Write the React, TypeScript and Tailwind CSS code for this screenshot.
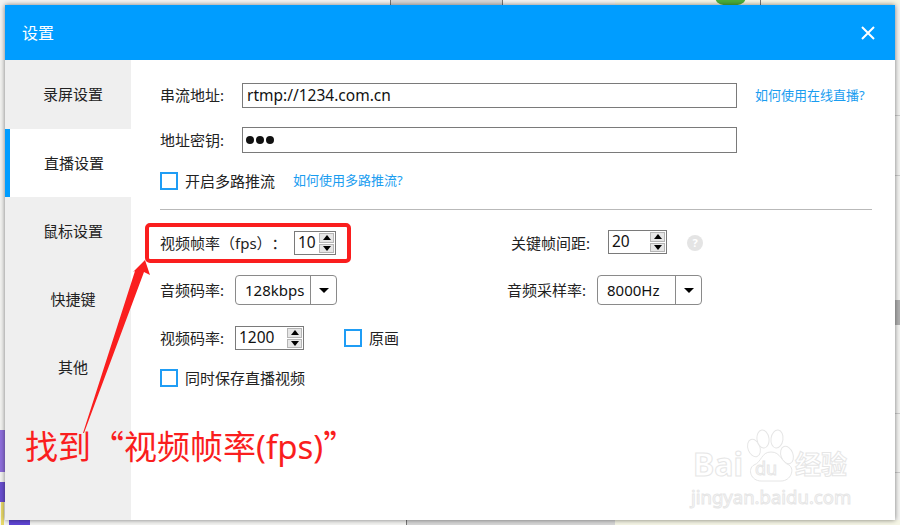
const font = "font-['Noto_Sans','Noto_Sans_CJK_SC',sans-serif]";

function Spinner({ value, className }: { value: string; className: string }) {
  return (
    <div className={`flex h-[24px] items-center justify-between border border-[#7a7a7a] bg-white pl-[3px] pr-[1px] ${className}`}>
      <span className="text-[15.5px] leading-none text-[#111]">{value}</span>
      <div className="flex h-[20px] w-[15px] flex-col gap-[1px]">
        <div className="flex flex-1 items-center justify-center border border-[#b5b5b5] bg-[#e6e6e6]">
          <div className="h-0 w-0 border-x-[4px] border-b-[5px] border-x-transparent border-b-black" />
        </div>
        <div className="flex flex-1 items-center justify-center border border-[#b5b5b5] bg-[#e6e6e6]">
          <div className="h-0 w-0 border-x-[4px] border-t-[5px] border-x-transparent border-t-black" />
        </div>
      </div>
    </div>
  );
}

function Select({ value, className, arrowClass }: { value: string; className: string; arrowClass: string }) {
  return (
    <div className={`flex h-[30px] items-center rounded-[4px] border border-[#8a8a8a] bg-white ${className}`}>
      <span className="flex-1 pl-[9px] text-[15px] leading-none text-[#111]">{value}</span>
      <div className={`flex h-full items-center justify-center border-l border-[#8a8a8a] ${arrowClass}`}>
        <div className="h-0 w-0 border-x-[5px] border-t-[5px] border-x-transparent border-t-black" />
      </div>
    </div>
  );
}

function Check({ label }: { label: string }) {
  return (
    <div className="flex items-center gap-[7px]">
      <div className="h-[18px] w-[18px] border-2 border-[#1f9df5] bg-white" />
      <span className="text-[15px] leading-none text-[#222]">{label}</span>
    </div>
  );
}

const navItems = ["录屏设置", "直播设置", "鼠标设置", "快捷键", "其他"];

export default function App() {
  return (
    <div className={`relative h-[525px] w-[900px] overflow-hidden bg-[#f4f4f2] ${font}`}>
      {/* the window behind the dialog */}
      <div className="absolute left-[390px] top-0 h-[5px] w-[113px] border-x border-[#777] bg-[#d8d8d8]" />
      <div className="absolute left-[615px] top-0 h-[5px] w-[285px] bg-[#f6f6e6]" />
      <div className="absolute left-[760px] top-0 h-[5px] w-px bg-[#777]" />
      <div className="absolute left-[715px] top-[-12px] h-[17px] w-[31px] rounded-full bg-[#4caf3a]" />
      <div className="absolute left-0 top-[430px] h-[42px] w-[5px] bg-[#8f6fdc]" />
      <div className="absolute left-0 top-[482px] h-[20px] w-[5px] bg-[#6a4fd0]" />
      <div className="absolute bottom-0 left-[1px] h-[23px] w-[3px] bg-[#e8d96a]" />
      <div className="absolute bottom-0 left-[9px] h-[5px] w-[21px] bg-[#5f45d6]" />
      <div className="absolute bottom-0 left-[406px] h-[5px] w-[209px] border-l border-[#777] bg-[#d8d8d8]" />
      <div className="absolute bottom-0 left-[615px] h-[5px] w-[285px] bg-[#f6f6e6]" />
      <div className="absolute right-0 top-[300px] h-[25px] w-[5px] bg-[#b0b0b0]" />
      <div className="absolute right-0 top-[115px] h-px w-[5px] bg-[#ccc]" />
      <div className="absolute right-0 top-[175px] h-px w-[5px] bg-[#ccc]" />
      <div className="absolute right-0 top-[413px] h-px w-[5px] bg-[#ccc]" />
      <div className="absolute right-0 top-[472px] h-px w-[5px] bg-[#ccc]" />

      <div className="relative ml-[5px] mt-[5px] flex h-[515px] w-[890px] flex-col bg-white shadow-[0_0_5px_rgba(0,0,0,0.5)]">
        <header className="flex h-[55px] shrink-0 items-center justify-between bg-[#009dff] pl-[17px] pr-[19px]">
          <span className="text-[16px] text-white">设置</span>
          <svg width="16" height="16" viewBox="0 0 16 16" fill="none" stroke="white" strokeWidth="2">
            <path d="M2 2 L14 14 M14 2 L2 14" />
          </svg>
        </header>

        <div className="flex flex-1">
          <nav className="flex w-[126px] shrink-0 flex-col bg-[#efefef]">
            {navItems.map((item, i) => (
              <div
                key={item}
                className={
                  i === 1
                    ? "flex h-[68px] items-center justify-center border-l-[5px] border-[#009dff] bg-white pl-[7px] text-[15px] text-[#222]"
                    : i === 0
                      ? "flex h-[69px] items-center justify-center pl-[10px] text-[15px] text-[#222]"
                      : "flex h-[68px] items-center justify-center pl-[10px] text-[15px] text-[#222]"
                }
              >
                {item}
              </div>
            ))}
          </nav>

          <main className="flex-1 pl-[29px] pr-[23px] pt-[23px] text-[15px] text-[#222]">
            <div className="flex h-[25px] items-center">
              <span className="w-[82px]">串流地址:</span>
              <div className="flex h-[25px] w-[495px] items-center border border-[#7a7a7a] pl-[4px] text-[15.5px] text-[#111]">rtmp://1234.com.cn</div>
              <span className="ml-[18px] text-[13px] text-[#1a9df0]">如何使用在线直播?</span>
            </div>
            <div className="mt-[19px] flex h-[26px] items-center">
              <span className="w-[82px]">地址密钥:</span>
              <div className="flex h-[26px] w-[495px] items-center gap-[2px] border border-[#7a7a7a] pl-[3px]">
                <div className="h-[8px] w-[8px] rounded-full bg-[#111]" />
                <div className="h-[8px] w-[8px] rounded-full bg-[#111]" />
                <div className="h-[8px] w-[8px] rounded-full bg-[#111]" />
              </div>
            </div>
            <div className="mt-[19px] flex h-[18px] items-center">
              <Check label="开启多路推流" />
              <span className="ml-[18px] text-[13px] text-[#1a9df0]">如何使用多路推流?</span>
            </div>
            <div className="mt-[19px] h-px bg-[#b9b9b9]" />

            <div className="mt-[21px] flex h-[24px] items-center">
              <span className="w-[134px] whitespace-nowrap [text-spacing-trim:space-all]">视频帧率（fps）：</span>
              <Spinner value="10" className="w-[42px]" />
              <span className="ml-[175px] w-[97px]">关键帧间距:</span>
              <Spinner value="20" className="mb-[2px] w-[59px]" />
              <div className="ml-[20px] flex h-[16px] w-[16px] items-center justify-center rounded-full bg-[#e4e4e4] text-[11px] font-bold text-white">?</div>
            </div>
            <div className="mt-[20px] flex h-[30px] items-center">
              <span className="w-[75px]">音频码率:</span>
              <Select value="128kbps" className="w-[102px]" arrowClass="w-[26px]" />
              <span className="ml-[170px] w-[90px]">音频采样率:</span>
              <Select value="8000Hz" className="w-[105px]" arrowClass="w-[26px]" />
            </div>
            <div className="mt-[21px] flex h-[24px] items-center">
              <span className="w-[75px]">视频码率:</span>
              <Spinner value="1200" className="w-[69px]" />
              <div className="ml-[40px]">
                <Check label="原画" />
              </div>
            </div>
            <div className="mt-[19px]">
              <Check label="同时保存直播视频" />
            </div>
          </main>
        </div>
      </div>

      {/* Baidu watermark */}
      <div className="absolute left-[693px] top-[428px] h-[80px] w-[160px] text-white">
        <span className="absolute left-0 top-[20px] text-[32px] font-bold leading-none [-webkit-text-stroke:1px_#e6e6e6]">Bai</span>
        <svg className="absolute left-[52px] top-0" width="54" height="56" viewBox="0 0 54 56" fill="white" stroke="#e6e6e6" strokeWidth="1">
          <ellipse cx="9" cy="20" rx="6" ry="9" transform="rotate(-20 9 20)" />
          <ellipse cx="18" cy="11" rx="6" ry="9" transform="rotate(-8 18 11)" />
          <ellipse cx="32" cy="11" rx="6" ry="9" transform="rotate(8 32 11)" />
          <ellipse cx="42" cy="27" rx="6" ry="9" transform="rotate(-20 42 27)" />
          <path d="M26 24 C16 24 17 34 9 37 C2 41 6 53 16 53 L36 53 C46 53 50 41 44 37 C36 34 36 24 26 24 Z" />
        </svg>
        <span className="absolute left-[62px] top-[31px] text-[18px] leading-none [-webkit-text-stroke:1px_#e6e6e6]">du</span>
        <span className="absolute left-[102px] top-[23px] text-[26px] font-bold leading-none [-webkit-text-stroke:1px_#e6e6e6]">经验</span>
        <span className="absolute left-[-2px] top-[60px] text-[18.5px] leading-none [-webkit-text-stroke:1px_#e6e6e6]">jingyan.baidu.com</span>
      </div>

      {/* red annotation */}
      <div className="absolute left-[145px] top-[223px] h-[40px] w-[206px] rounded-[5px] border-[4px] border-[#fa1e1e]" />
      <svg className="absolute left-0 top-0" width="900" height="525" viewBox="0 0 900 525" fill="#fa1e1e">
        <polygon points="145,260 150,275 144,272 84,433 83,433 135,271 133,272" />
      </svg>
      <div className="absolute left-[25px] top-[423px] text-[33px] leading-[44px] text-[#fa1e1e]">
        找到<span className="font-['Noto_Sans_CJK_SC']">“</span>视频帧率(fps)<span className="font-['Noto_Sans_CJK_SC']">”</span>
      </div>
    </div>
  );
}
